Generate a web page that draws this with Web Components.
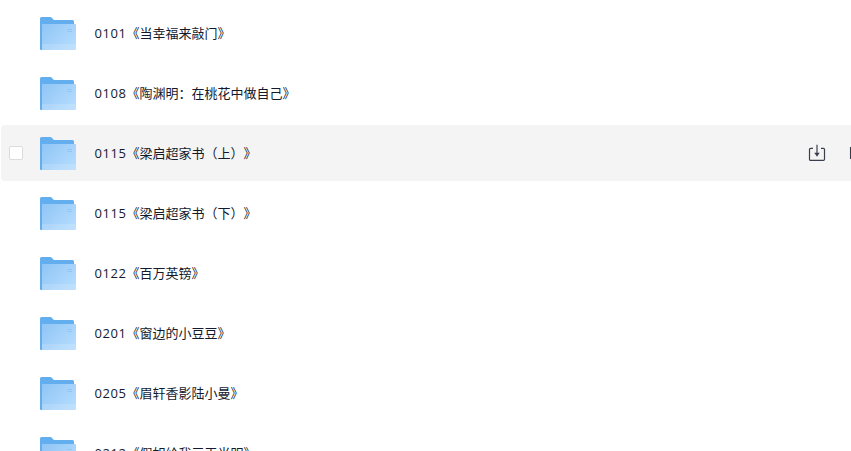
<!DOCTYPE html>
<html>
<head>
<meta charset="utf-8">
<style>
  html, body { margin: 0; height: 100%; overflow: hidden; background: #fff; }
</style>
</head>
<body>
<file-list>
  <file-row code="0101">《当幸福来敲门》</file-row>
  <file-row code="0108">《陶渊明：在桃花中做自己》</file-row>
  <file-row code="0115" active>《梁启超家书（上）》</file-row>
  <file-row code="0115">《梁启超家书（下）》</file-row>
  <file-row code="0122">《百万英镑》</file-row>
  <file-row code="0201">《窗边的小豆豆》</file-row>
  <file-row code="0205">《眉轩香影陆小曼》</file-row>
  <file-row code="0212">《假如给我三天光明》</file-row>
</file-list>

<script>
class FileList extends HTMLElement {
  constructor() {
    super();
    this.attachShadow({ mode: 'open' });
    this.shadowRoot.innerHTML = `
      <style>
        :host { display: flex; flex-direction: column; gap: 4px; padding: 5px 0 0 1px; width: 900px; box-sizing: border-box; }
      </style>
      <slot></slot>`;
  }
}

class FileRow extends HTMLElement {
  constructor() {
    super();
    this.attachShadow({ mode: 'open' });
    this.shadowRoot.innerHTML = `
      <style>
        :host {
          display: flex; align-items: center; height: 56px; flex: none;
          border-radius: 4px; color: #141a2c;
          font: 13px/20px "Open Sans", "Noto Sans CJK SC", sans-serif;
          font-feature-settings: "palt" 0, "chws" 0;
          text-spacing-trim: space-all;
        }
        :host([active]) { background: #f4f4f4; }
        .check { box-sizing: border-box; width: 14px; height: 14px; margin-left: 8px; flex: none; border: 1px solid #dcdcdc; border-radius: 2px; background: #fff; visibility: hidden; }
        :host([active]) .check { visibility: visible; }
        .folder { width: 36px; height: 33px; margin: 1px 0 0 17px; flex: none; display: block; }
        .name { margin-left: 18.500px; flex: none; width: 699.500px; white-space: nowrap; }
        .code { letter-spacing: .56px; }
        .actions { display: none; align-items: center; gap: 23px; margin-left: 14px; }
        :host([active]) .actions { display: flex; }
        .actions svg { display: block; flex: none; width: 18px; height: 18px; }
      </style>
      <span class="check"></span>
      <svg class="folder" viewBox="0 0 36 33">
        <defs>
          <linearGradient id="front" x1="0" y1="0" x2="1" y2="0.7">
            <stop offset="0" stop-color="#8fc5f5"/>
            <stop offset="1" stop-color="#b3dbfe"/>
          </linearGradient>
        </defs>
        <path d="M0 1.500a1.500 1.500 0 0 1 1.500-1.500h9.500l3 3h18.500a1.500 1.500 0 0 1 1.500 1.500v28.500H1a1 1 0 0 1-1-1z" fill="#63aeee"/>
        <path d="M2 7h33a1 1 0 0 1 1 1v24a1 1 0 0 1-1 1H2z" fill="url(#front)"/>
        <rect x="2" y="27" width="34" height="6" fill="#fff" opacity=".14"/>
        <rect x="27" y="12" width="5" height="1" fill="#93c6f2"/>
        <rect x="27" y="14" width="5" height="1" fill="#93c6f2"/>
      </svg>
      <span class="name"><span class="code"></span><slot></slot></span>
      <span class="actions">
        <svg viewBox="0 0 18 18" fill="none" stroke="#3a3f4c" stroke-width="1.2">
          <path d="M5 4.300H2.600A1.100 1.100 0 0 0 1.500 5.400v9.900A1.100 1.100 0 0 0 2.600 16.400h12.800a1.100 1.100 0 0 0 1.100-1.100V5.400A1.100 1.100 0 0 0 15.400 4.300H13"/>
          <path d="M9 .8v8.500"/>
          <path d="M6.300 8.800h5.400L9 12.800z" fill="#3a3f4c" stroke="none"/>
        </svg>
        <svg viewBox="0 0 18 18" fill="none" stroke="#3a3f4c" stroke-width="1.300">
          <path d="M1.600 3v12"/>
        </svg>
      </span>`;
    this.shadowRoot.querySelector('.code').textContent = this.getAttribute('code');
  }
}

customElements.define('file-list', FileList);
customElements.define('file-row', FileRow);
</script>
</body>
</html>
